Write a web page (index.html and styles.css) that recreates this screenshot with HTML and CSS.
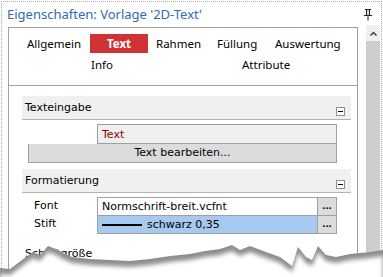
FILE: index.html
```html
<!DOCTYPE html>
<html lang="de">
<head>
    <meta charset="UTF-8">
    <title>Eigenschaften</title>
    <link rel="stylesheet" href="styles.css">
</head>
<body>

<div class="window">
    <div class="title-bar">
        <span class="title">Eigenschaften: Vorlage '2D-Text'</span>
        <svg class="pin" width="8" height="12" viewBox="0 0 8 12">
            <path d="M1 0.5h6 M2.5 0.5v6 M5.5 0.5v6 M0 6.5h8 M4 6.5v5" stroke="#222" stroke-width="1" fill="none"/>
            <rect x="3" y="1" width="2" height="5" fill="#ddd"/>
        </svg>
    </div>

    <div class="main">
        <div class="panel">
            <div class="tabs">
                <div class="tab-row">
                    <span class="tab tab-allgemein">Allgemein</span>
                    <span class="tab tab-active">Text</span>
                    <span class="tab tab-rahmen">Rahmen</span>
                    <span class="tab tab-fuellung">Füllung</span>
                    <span class="tab">Auswertung</span>
                </div>
                <div class="tab-row second">
                    <span class="tab tab-info">Info</span>
                    <span class="tab">Attribute</span>
                </div>
            </div>

            <div class="content">
                <div class="section-head">
                    <span>Texteingabe</span>
                    <span class="collapse"></span>
                </div>
                <div class="text-input">
                    <div class="field field-grey red">Text</div>
                    <div class="edit-button">Text bearbeiten...</div>
                </div>

                <div class="section-head">
                    <span>Formatierung</span>
                    <span class="collapse"></span>
                </div>
                <div class="prop-row">
                    <span class="prop-label">Font</span>
                    <div class="field">Normschrift-breit.vcfnt</div>
                    <div class="more">...</div>
                </div>
                <div class="prop-row">
                    <span class="prop-label">Stift</span>
                    <div class="field field-selected"><span class="pen-line"></span>schwarz 0,35</div>
                    <div class="more">...</div>
                </div>

                <div class="section-label">Schriftgröße</div>
            </div>
        </div>

        <div class="scrollbar">
            <div class="scroll-up">
                <svg width="7" height="5" viewBox="0 0 7 5">
                    <path d="M0.5 4.5l3-3l3 3" stroke="#333" stroke-width="1.4" fill="none"/>
                </svg>
            </div>
            <div class="scroll-thumb"></div>
        </div>
    </div>
</div>

<svg class="torn" width="383" height="45" viewBox="0 232 383 45">
    <defs>
        <filter id="soft" x="-5%" y="-50%" width="110%" height="200%">
            <feGaussianBlur stdDeviation="2"/>
        </filter>
    </defs>
    <path fill="#8e8e8e" d="M0 268 L10 269 L18 263 L26 257 L33 252 L40 255 L48 246 L56 249 L63 253 L72 257 L90 259 L110 260 L130 261 L150 259 L170 256 L190 254 L205 251 L220 249 L232 245 L240 250 L250 246 L258 249 L266 252 L280 257 L292 266 L298 247 L306 257 L312 260 L318 246 L326 255 L336 257 L350 254 L370 252 L383 250 L383 277 L0 277 Z"/>
    <path fill="#fff" filter="url(#soft)" transform="translate(0 6)" d="M0 268 L10 269 L18 263 L26 257 L33 252 L40 255 L48 246 L56 249 L63 253 L72 257 L90 259 L110 260 L130 261 L150 259 L170 256 L190 254 L205 251 L220 249 L232 245 L240 250 L250 246 L258 249 L266 252 L280 257 L292 266 L298 247 L306 257 L312 260 L318 246 L326 255 L336 257 L350 254 L370 252 L383 250 L383 290 L0 290 Z"/>
</svg>

</body>
</html>
```

FILE: styles.css
```css
body {
    margin: 0;
    background-color: #fff;
    font-family: "Noto Sans", "Open Sans", sans-serif;
    font-size: 12px;
    color: #000;
    overflow: hidden;
}

.window {
    width: 379px;
    height: 274px;
    margin: 1px 0 0 1px;
    border: 1px dotted #a8a8a8;
    border-bottom: none;
    background-color: #fff;
    overflow: hidden;
}

.title-bar {
    height: 25px;
    display: flex;
    align-items: center;
    justify-content: space-between;
    padding: 0 9px 0 5px;
}

.title {
    color: #2f6bb3;
    font-size: 13px;
    margin-top: -2px;
}

.pin {
    margin-top: 0;
}

.main {
    display: flex;
    align-items: flex-start;
}

.panel {
    width: 348px;
    height: 246px;
    margin-left: 6px;
    border: 1px solid #a0a0a0;
}

.tabs {
    height: 58px;
    border-bottom: 1px solid #a0a0a0;
    padding-top: 6px;
    box-sizing: border-box;
}

.tab-row {
    display: flex;
    height: 19px;
    align-items: center;
    padding-left: 18px;
    font-size: 11.5px;
}

.tab-row.second {
    margin-top: 2px;
    padding-left: 82px;
}

.tab {
    line-height: 19px;
}

.tab-allgemein {
    width: 63px;
}

.tab-active {
    width: 58px;
    text-align: center;
    background-color: #cf3336;
    color: #fff;
    font-weight: bold;
    margin-right: 8px;
}

.tab-rahmen {
    width: 61px;
}

.tab-fuellung {
    width: 58px;
}

.tab-info {
    width: 151px;
}

.content {
    padding: 10px 6px 0 13px;
}

.section-head {
    height: 23px;
    display: flex;
    align-items: center;
    justify-content: space-between;
    padding: 0 6px 0 3px;
    background-color: #f0f0f0;
    border-bottom: 1px solid #b4b4b4;
    font-family: "DejaVu Sans", sans-serif;
    font-size: 11px;
    margin-bottom: 4px;
}

.collapse {
    position: relative;
    width: 7px;
    height: 7px;
    margin-top: 8px;
    border: 1px solid #909090;
    background-color: #fff;
}

.collapse::after {
    content: "";
    position: absolute;
    left: 1px;
    top: 3px;
    width: 5px;
    height: 1px;
    background-color: #000;
}

.text-input {
    width: 309px;
    margin-left: 6px;
    margin-bottom: 6px;
    display: flex;
    flex-direction: column;
    align-items: flex-end;
}

.field {
    flex: 1;
    height: 17px;
    line-height: 17px;
    border: 1px solid #a0a0a0;
    padding-left: 4px;
    background-color: #fff;
    font-family: "DejaVu Sans", sans-serif;
    font-size: 11px;
    display: flex;
    align-items: center;
}

.text-input .field {
    flex: none;
    width: 234px;
    height: 18px;
}

.field-grey {
    background-color: #efefef;
}

.red {
    color: #8a0000;
}

.edit-button {
    width: 307px;
    height: 18px;
    line-height: 18px;
    text-align: center;
    border: 1px solid #a0a0a0;
    border-top: none;
    background-color: #dcdcdc;
    font-family: "DejaVu Sans", sans-serif;
    font-size: 11px;
}

.prop-row {
    display: flex;
    width: 315px;
    margin-top: -1px;
}

.section-head + .prop-row {
    margin-top: 0;
}

.prop-label {
    width: 63px;
    padding-left: 12px;
    line-height: 18px;
    font-family: "DejaVu Sans", sans-serif;
    font-size: 11px;
}

.field-selected {
    background-color: #a6c9ef;
}

.pen-line {
    display: inline-block;
    width: 40px;
    height: 2px;
    background-color: #000;
    margin-right: 5px;
}

.more {
    width: 18px;
    height: 17px;
    line-height: 13px;
    text-align: center;
    border: 1px solid #a0a0a0;
    border-left: none;
    background-color: #dcdcdc;
    font-size: 11px;
    font-weight: bold;
}

.section-label {
    margin-top: 13px;
    padding-left: 3px;
    font-family: "DejaVu Sans", sans-serif;
    font-size: 11px;
}

.scrollbar {
    width: 14px;
    height: 250px;
    margin-left: 8px;
    margin-top: -2px;
    background-color: #f0f0f0;
}

.scroll-up {
    height: 16px;
    display: flex;
    justify-content: center;
    align-items: center;
}

.scroll-thumb {
    height: 234px;
    background-color: #cdcdcd;
}

.torn {
    position: absolute;
    left: 0;
    top: 232px;
}
```
